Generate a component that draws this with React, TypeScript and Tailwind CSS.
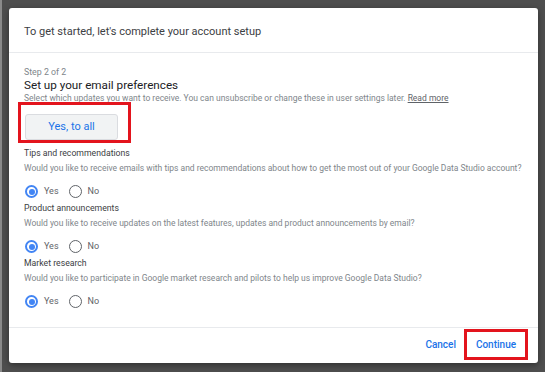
import { FC } from 'react';

const Radio: FC<{ checked?: boolean; label: string }> = ({ checked, label }) => (
    <label className="flex items-center gap-[6px]">
        {checked ? (
            <span className="flex h-[13px] w-[13px] items-center justify-center rounded-full border-[2px] border-[#4285f4]">
                <span className="h-[6px] w-[6px] rounded-full bg-[#4285f4]" />
            </span>
        ) : (
            <span className="h-[13px] w-[13px] rounded-full border-[1.5px] border-[#5f6368]" />
        )}
        <span className="text-[9px] text-[#5f6368]">{label}</span>
    </label>
);

const Question: FC<{ title: string; text: string }> = ({ title, text }) => (
    <div className="flex flex-col">
        <div className="h-[15px] text-[8.7px] leading-[15px] text-[#3c4043]">{title}</div>
        <div className="h-[15px] whitespace-nowrap text-[8.5px] leading-[15px] text-[#80868b]">{text}</div>
        <div className="flex h-[25px] items-center gap-[10px] pl-[1px] pt-[6px]">
            <Radio checked label="Yes" />
            <Radio label="No" />
        </div>
    </div>
);

export default function App() {
    return (
        <div className="h-[372px] w-[545px] overflow-hidden border-l-[2px] border-[#8a8a8a] bg-[#4e4e4e] pl-[7px] pt-[8px] font-['Roboto',sans-serif]">
            <div className="flex h-[355px] w-[529px] flex-col rounded-[3px] bg-white shadow-[0_2px_6px_rgba(0,0,0,0.4)]">
                <div className="flex h-[45px] items-center border-b border-[#e8eaed] px-[15px] pt-[4px] text-[11px] text-[#3c4043]">
                    To get started, let's complete your account setup
                </div>
                <div className="flex flex-1 flex-col px-[15px] pt-[14px]">
                    <div className="text-[8.8px] leading-[11px] text-[#80868b]">Step 2 of 2</div>
                    <div className="text-[11.7px] leading-[14px] text-[#202124]">Set up your email preferences</div>
                    <div className="whitespace-nowrap text-[8.5px] leading-[12px] text-[#80868b]">
                        Select which updates you want to receive. You can unsubscribe or change these in user settings later.{' '}
                        <span className="text-[#5f6368] underline">Read more</span>
                    </div>
                    <div className="-ml-[6px] -mt-[2px] mb-[3px] h-[41px] w-[113px] border-[3px] border-[#e3141d] pl-[4px] pt-[8px]">
                        <button className="h-[26px] w-[93px] rounded-[3px] border border-[#dadce0] bg-[#f1f3f4] text-[11px] text-[#1a73e8]">
                            Yes, to all
                        </button>
                    </div>
                    <Question
                        title="Tips and recommendations"
                        text="Would you like to receive emails with tips and recommendations about how to get the most out of your Google Data Studio account?"
                    />
                    <Question
                        title="Product announcements"
                        text="Would you like to receive updates on the latest features, updates and product announcements by email?"
                    />
                    <Question
                        title="Market research"
                        text="Would you like to participate in Google market research and pilots to help us improve Google Data Studio?"
                    />
                </div>
                <div className="flex h-[36px] items-center justify-end gap-[4px] border-t border-[#e8eaed] pb-[2px] pr-[10px]">
                    <button className="px-[4px] text-[10px] font-medium text-[#1a73e8]">Cancel</button>
                    <div className="flex h-[31px] w-[64px] items-center justify-center border-[3px] border-[#e3141d]">
                        <button className="text-[10px] font-medium text-[#1a73e8]">Continue</button>
                    </div>
                </div>
            </div>
        </div>
    );
}
